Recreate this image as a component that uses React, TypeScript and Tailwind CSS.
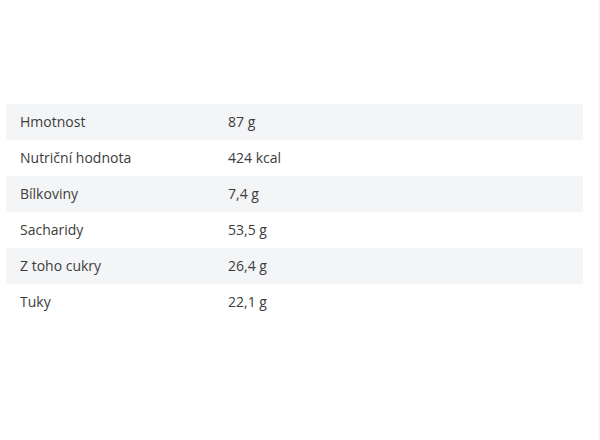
const ROWS: [string, string][] = [
  ["Hmotnost", "87 g"],
  ["Nutriční hodnota", "424 kcal"],
  ["Bílkoviny", "7,4 g"],
  ["Sacharidy", "53,5 g"],
  ["Z toho cukry", "26,4 g"],
  ["Tuky", "22,1 g"],
];

export default function App() {
  return (
    <div className="w-[600px] h-[440px] bg-white flex font-['Open_Sans',sans-serif]">
      <div className="flex-1 pt-[104px] pl-[6px] pr-[15px]">
        <table className="w-full border-collapse text-[14px] text-[#3c3c3c]">
          <tbody>
            {ROWS.map(([label, value], i) => (
              <tr key={label} className={i % 2 === 0 ? "bg-[#f4f5f7]" : "bg-white"}>
                <td className="w-[208px] h-[36px] pl-[14px] pb-[2px] align-middle">{label}</td>
                <td className="h-[36px] pl-[14px] pb-[2px] align-middle">{value}</td>
              </tr>
            ))}
          </tbody>
        </table>
      </div>
      <div className="w-[2px] bg-[#f7f7f7]" />
    </div>
  );
}
